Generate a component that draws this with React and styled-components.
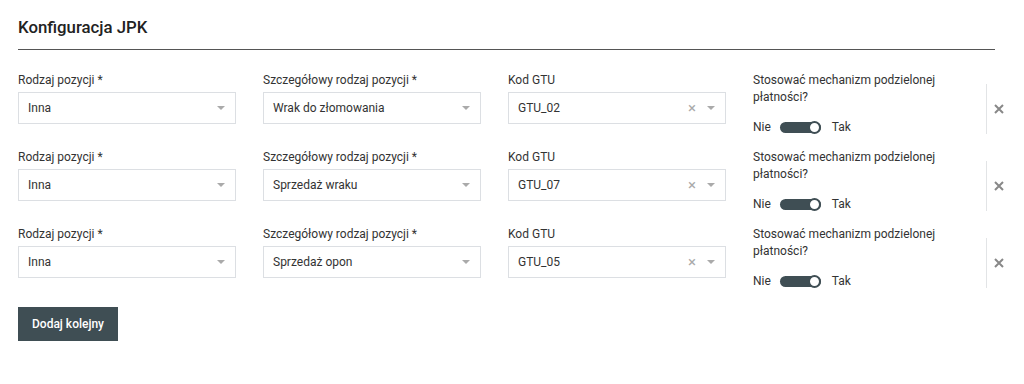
import React, { useState } from "react";
import styled, { createGlobalStyle } from "styled-components";

const GlobalStyle = createGlobalStyle`
  body {
    margin: 0;
    font-family: Roboto, "Liberation Sans", Arial, sans-serif;
    color: #333;
    background: #fff;
  }
`;

const Page = styled.div`
  padding: 14px 29px 0 18px;
`;

const Title = styled.h2`
  margin: 0;
  font-size: 16.8px;
  font-weight: 500;
  color: #222;
  line-height: 26px;
  padding-bottom: 9px;
  border-bottom: 1px solid #555;
`;

const Rows = styled.div`
  display: flex;
  flex-direction: column;
  gap: 17px;
  padding-top: 22px;
`;

const Row = styled.div`
  display: flex;
  align-items: flex-start;
  height: 60px;
`;

const Fields = styled.div`
  display: grid;
  grid-template-columns: 218px 218px 218px 233px;
  column-gap: 27px;
  flex: 0 0 auto;
`;

const Field = styled.div`
  display: flex;
  flex-direction: column;
`;

const Label = styled.label`
  font-size: 12px;
  line-height: 17px;
  color: #333;
  margin-bottom: 3px;
`;

const SelectBox = styled.div`
  height: 32px;
  box-sizing: border-box;
  border: 1px solid #dcdfe3;
  display: flex;
  align-items: center;
  padding: 0 10px 0 9px;
  font-size: 12px;
  color: #333;
  background: #fff;
`;

const Value = styled.span`
  flex: 1;
`;

const Clear = styled.span`
  color: #aaa;
  font-size: 15px;
  margin-right: 11px;
  line-height: 1;
`;

const Caret = styled.span`
  width: 0;
  height: 0;
  border-left: 4px solid transparent;
  border-right: 4px solid transparent;
  border-top: 4px solid #aaa;
`;

const SwitchLine = styled.div`
  display: flex;
  align-items: center;
  font-size: 12px;
  margin-top: 11px;
  gap: 9px;
`;

const Track = styled.button`
  width: 41px;
  height: 11px;
  border-radius: 6px;
  border: none;
  padding: 0;
  background: #3f4e54;
  position: relative;
  cursor: pointer;
  margin-right: 2px;
`;

const Knob = styled.span`
  position: absolute;
  top: -1px;
  ${(p) => (p.$on ? "right: 0;" : "left: 0;")}
  width: 13px;
  height: 13px;
  box-sizing: border-box;
  border-radius: 50%;
  background: #fff;
  border: 2px solid #3f4e54;
`;

const Remove = styled.div`
  margin-top: 12px;
  height: 50px;
  border-left: 1px solid #e2e4e6;
  display: flex;
  align-items: center;
  padding-left: 5px;
`;

const RemoveButton = styled.button`
  border: none;
  background: none;
  padding: 2px;
  cursor: pointer;
  display: flex;
`;

const AddButton = styled.button`
  margin-top: 21px;
  height: 34px;
  padding: 0 14px;
  border: none;
  background: #3f4e54;
  color: #fff;
  font-family: inherit;
  font-size: 12px;
  font-weight: 500;
  cursor: pointer;
`;

const rowsData = [
  { rodzaj: "Inna", szczegol: "Wrak do złomowania", gtu: "GTU_02" },
  { rodzaj: "Inna", szczegol: "Sprzedaż wraku", gtu: "GTU_07" },
  { rodzaj: "Inna", szczegol: "Sprzedaż opon", gtu: "GTU_05" },
];

const Select = ({ value, clearable }) => (
  <SelectBox>
    <Value>{value}</Value>
    {clearable && <Clear>×</Clear>}
    <Caret />
  </SelectBox>
);

const App = () => {
  const [rows] = useState(rowsData);

  return (
    <Page>
      <GlobalStyle />
      <Title>Konfiguracja JPK</Title>
      <Rows>
        {rows.map((item, i) => (
          <Row key={i}>
            <Fields>
              <Field>
                <Label>Rodzaj pozycji *</Label>
                <Select value={item.rodzaj} />
              </Field>
              <Field>
                <Label>Szczegółowy rodzaj pozycji *</Label>
                <Select value={item.szczegol} />
              </Field>
              <Field>
                <Label>Kod GTU</Label>
                <Select value={item.gtu} clearable />
              </Field>
              <Field>
                <Label>Stosować mechanizm podzielonej płatności?</Label>
                <SwitchLine>
                  <span>Nie</span>
                  <Track>
                    <Knob $on />
                  </Track>
                  <span>Tak</span>
                </SwitchLine>
              </Field>
            </Fields>
            <Remove>
              <RemoveButton>
                <svg width="10" height="10" viewBox="0 0 10 10">
                  <path d="M1 1L9 9M9 1L1 9" stroke="#888" strokeWidth="2" />
                </svg>
              </RemoveButton>
            </Remove>
          </Row>
        ))}
      </Rows>
      <AddButton>Dodaj kolejny</AddButton>
    </Page>
  );
};

export default App;
